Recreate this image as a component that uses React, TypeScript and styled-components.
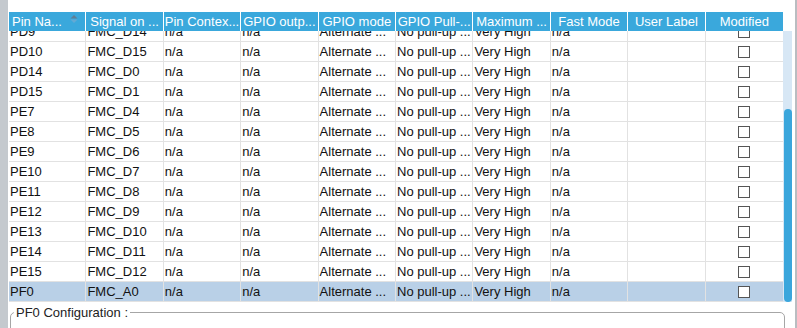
import styled, { createGlobalStyle } from 'styled-components';
import { useLayoutEffect, useRef, useState } from 'react';

const GlobalStyle = createGlobalStyle`
    html, body {
        margin: 0;
        padding: 0;
        background: #fff;
        font-family: "Liberation Sans", Arial, sans-serif;
        font-size: 13px;
        overflow: hidden;
    }
`

const ROW_H = 20;
const BODY_H = 271;

const columns = ['Pin Na...', 'Signal on ...', 'Pin Contex...', 'GPIO outp...', 'GPIO mode', 'GPIO Pull-...', 'Maximum ...', 'Fast Mode', 'User Label', 'Modified'];

const pins: [string, string][] = [
    ['PD0', 'FMC_D2'], ['PD1', 'FMC_D3'], ['PD4', 'FMC_NOE'], ['PD5', 'FMC_NWE'], ['PD8', 'FMC_D13'],
    ['PD9', 'FMC_D14'], ['PD10', 'FMC_D15'], ['PD14', 'FMC_D0'], ['PD15', 'FMC_D1'],
    ['PE7', 'FMC_D4'], ['PE8', 'FMC_D5'], ['PE9', 'FMC_D6'], ['PE10', 'FMC_D7'], ['PE11', 'FMC_D8'],
    ['PE12', 'FMC_D9'], ['PE13', 'FMC_D10'], ['PE14', 'FMC_D11'], ['PE15', 'FMC_D12'], ['PF0', 'FMC_A0'],
];

const Page = styled.div`
    display: flex;
    width: 797px;
    height: 328px;
    overflow: hidden;
`
const LeftStrip = styled.div`
    width: 8px;
    flex-shrink: 0;
    background-color: #c4c9ce;
`
const RightStrip = styled.div`
    width: 2px;
    flex-shrink: 0;
    background-color: #b9bdc1;
`
const Main = styled.div`
    flex: 1;
    display: flex;
    flex-direction: column;
    padding: 12px 3px 0 1px;
    min-width: 0;
    overflow: hidden;
`
const TableWrap = styled.div`
    display: flex;
    flex-shrink: 0;
`
const Table = styled.div`
    width: 774px;
    display: flex;
    flex-direction: column;
`
const HeaderRow = styled.div`
    display: grid;
    grid-template-columns: repeat(10, 1fr);
    height: 19px;
`
const HeaderCell = styled.div<{ $sort?: boolean }>`
    background-color: #3aa8dc;
    color: #fff;
    border-right: 1px solid #fff;
    padding: ${p => p.$sort ? '0 14px 0 3px' : '0 1px'};
    line-height: 19px;
    text-align: ${p => p.$sort ? 'left' : 'center'};
    white-space: nowrap;
    overflow: hidden;
    position: relative;
    &:last-child{
        border-right: none;
    }
`
const SortIcon = styled.svg`
    position: absolute;
    right: 7px;
    top: 3px;
`
const Body = styled.div`
    height: ${BODY_H}px;
    overflow: hidden;
`
const Row = styled.div<{ $selected?: boolean }>`
    display: grid;
    grid-template-columns: repeat(10, 1fr);
    height: ${ROW_H - 1}px;
    border-bottom: 1px solid #e2e2e2;
    background-color: ${p => p.$selected ? '#b9d0e7' : '#fff'};
    color: #111;
`
const Cell = styled.div<{ $center?: boolean }>`
    border-right: 1px solid #e2e2e2;
    padding: 0 1px;
    line-height: 19px;
    white-space: nowrap;
    overflow: hidden;
    display: flex;
    align-items: center;
    justify-content: ${p => p.$center ? 'center' : 'flex-start'};
    &:last-child{
        border-right: none;
    }
`
const CheckBox = styled.span`
    width: 10px;
    height: 10px;
    border: 1px solid #555;
    background-color: #fff;
`
const Track = styled.div`
    width: 9px;
    margin-top: 19px;
    height: ${BODY_H}px;
    background-color: #d7e7f5;
    position: relative;
`
const Thumb = styled.div`
    position: absolute;
    left: 1px;
    width: 8px;
    background-color: #3aa6dc;
    border-radius: 4px;
`
const Fieldset = styled.fieldset`
    margin: 2px 7px 0 1px;
    padding: 0;
    height: 80px;
    flex-shrink: 0;
    border: 1px solid #a6a6a6;
    border-radius: 5px;
    min-width: 0;
`
const Legend = styled.legend`
    margin-left: 3px;
    padding: 0 2px;
    color: #222;
    font-size: 13px;
    line-height: 17px;
`

export default function App() {
    const bodyRef = useRef<HTMLDivElement>(null);
    const [scroll, setScroll] = useState(0);

    useLayoutEffect(() => {
        const el = bodyRef.current;
        if (el) {
            el.scrollTop = el.scrollHeight;
            setScroll(el.scrollTop);
        }
    }, []);

    const total = pins.length * ROW_H;
    const thumbH = BODY_H * BODY_H / total;
    const thumbTop = scroll * BODY_H / total;

    return (
        <>
            <GlobalStyle />
            <Page>
                <LeftStrip />
                <Main>
                    <TableWrap>
                        <Table>
                            <HeaderRow>
                                {columns.map((c, i) => (
                                    <HeaderCell key={c} $sort={i === 0}>
                                        {c}
                                        {i === 0 && (
                                            <SortIcon width="8" height="12" viewBox="0 0 8 12">
                                                <polygon points="4,0 7.5,3.5 0.5,3.5" fill="#5f7f96" />
                                                <polygon points="0.5,4.5 7.5,4.5 4,8" fill="#63a9d3" />
                                            </SortIcon>
                                        )}
                                    </HeaderCell>
                                ))}
                            </HeaderRow>
                            <Body ref={bodyRef}>
                                {pins.map(([pin, signal]) => (
                                    <Row key={pin} $selected={pin === 'PF0'}>
                                        <Cell>{pin}</Cell>
                                        <Cell>{signal}</Cell>
                                        <Cell>n/a</Cell>
                                        <Cell>n/a</Cell>
                                        <Cell>Alternate ...</Cell>
                                        <Cell>No pull-up ...</Cell>
                                        <Cell>Very High</Cell>
                                        <Cell>n/a</Cell>
                                        <Cell></Cell>
                                        <Cell $center><CheckBox /></Cell>
                                    </Row>
                                ))}
                            </Body>
                        </Table>
                        <Track>
                            <Thumb style={{ top: thumbTop, height: thumbH }} />
                        </Track>
                    </TableWrap>
                    <Fieldset>
                        <Legend>PF0 Configuration :</Legend>
                    </Fieldset>
                </Main>
                <RightStrip />
            </Page>
        </>
    )
}
